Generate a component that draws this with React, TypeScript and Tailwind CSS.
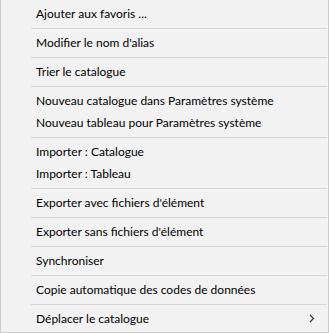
import React from "react";

type Section = { items: string[]; submenu?: boolean };

const sections: Section[] = [
  { items: ["Ajouter aux favoris ..."] },
  { items: ["Modifier le nom d'alias"] },
  { items: ["Trier le catalogue"] },
  {
    items: [
      "Nouveau catalogue dans Paramètres système",
      "Nouveau tableau pour Paramètres système",
    ],
  },
  { items: ["Importer : Catalogue", "Importer : Tableau"] },
  { items: ["Exporter avec fichiers d'élément"] },
  { items: ["Exporter sans fichiers d'élément"] },
  { items: ["Synchroniser"] },
  { items: ["Copie automatique des codes de données"] },
  { items: ["Déplacer le catalogue"], submenu: true },
];

const MenuItem: React.FC<{ label: string; submenu?: boolean }> = ({
  label,
  submenu,
}) => {
  return (
    <div className="flex h-[22px] items-center justify-between pl-[35px] pr-[13px]">
      <span className="whitespace-nowrap">{label}</span>
      {submenu && (
        <svg width="6" height="9" viewBox="0 0 6 9" className="mb-[1px]">
          <path d="M1 1 L4.5 4.5 L1 8" fill="none" stroke="#333" strokeWidth="1.1" />
        </svg>
      )}
    </div>
  );
};

export default function App() {
  return (
    <div
      className="w-[329px] h-[333px] bg-[#f2f2f2] border-x border-b border-[#cccccc] text-[12px] text-black leading-none overflow-hidden"
      style={{ fontFamily: 'Lato, "Noto Sans", sans-serif' }}
    >
      {sections.map((section, i) => (
        <div key={i}>
          {i > 0 && <div className="ml-[30px] mr-[1px] h-px bg-[#d7d7d7]" />}
          <div className="py-[3px]">
            {section.items.map((label) => (
              <MenuItem key={label} label={label} submenu={section.submenu} />
            ))}
          </div>
        </div>
      ))}
    </div>
  );
}
